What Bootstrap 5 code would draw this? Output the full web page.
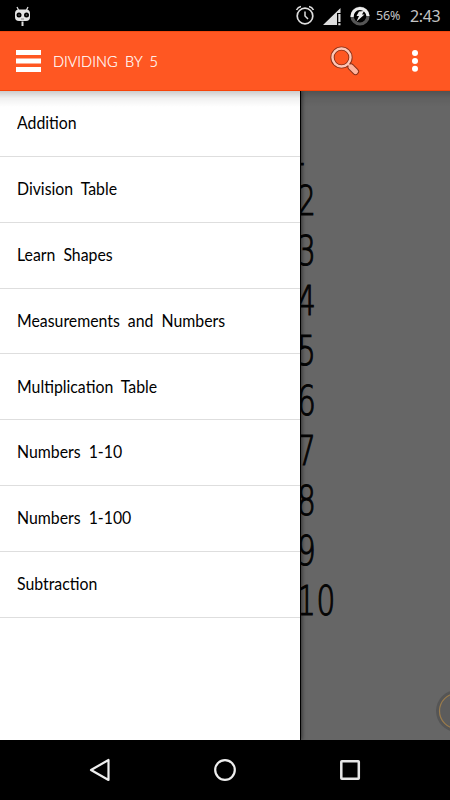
<!DOCTYPE html>
<html lang="en">
<head>
<meta charset="utf-8">
<meta name="viewport" content="width=device-width, initial-scale=1">
<title>Dividing by 5</title>
<link href="https://cdn.jsdelivr.net/npm/bootstrap@5.3.0/dist/css/bootstrap.min.css" rel="stylesheet">
<style>
body{font-family:Lato,"Open Sans",sans-serif;width:450px;height:800px;overflow:hidden;background:#000}
svg{display:block;flex:none}
.status{height:31px;font-family:"Noto Sans","Open Sans",sans-serif;color:#c4c4c4;padding:0 10px 0 14px}
.percent{font-size:12.5px;width:34px;margin-left:6px;padding-top:1px;letter-spacing:-.1px}
.clock{font-size:16px;width:30px;letter-spacing:-.35px}
.battery{margin-left:9px}
.appbar{height:60px;background:#ff5722;border-top:1px solid #f24a10;border-bottom:1px solid #f74409;padding:0 29px 0 16px;z-index:3}
.heading{font-size:16.500px;font-weight:300;color:#fff;margin-left:12px;word-spacing:4px;line-height:20px;padding-bottom:1px;transform:scaleX(.88);transform-origin:0 50%;-webkit-text-stroke:.2px #fff}
.search{margin-right:49px}
.stage{height:649px;background:#666}
.drawer{width:301px;background:#fff;border-right:1px solid #000;box-shadow:1px 0 4px rgba(0,0,0,.55);z-index:1}
.shade{height:16px;background:linear-gradient(rgba(0,0,0,.2),rgba(0,0,0,.06) 45%,transparent);z-index:2}
.entry{height:65.86px;border-bottom:1px solid #dedede;padding:0 0 1.500px 17px;font-size:18px;color:#000}
.entry span{transform:scaleX(.88);transform-origin:0 50%;word-spacing:4.500px}
.answers{padding:35px 0 0 297px;font-family:"DejaVu Sans",sans-serif;font-weight:200;font-size:41px;color:#050505;-webkit-text-stroke:1.2px #050505}
.answers div{height:50px;line-height:50px;transform:scaleX(.72);transform-origin:0 50%;letter-spacing:1px}
.answers div:first-child{margin-left:-9px}
.bubble{right:-29px;bottom:7px}
.softkeys{height:60px;padding:0 89px}
</style>
<script src="https://cdn.jsdelivr.net/npm/bootstrap@5.3.0/dist/js/bootstrap.bundle.min.js"></script>
</head>
<body>
<header class="status d-flex align-items-center">
  <svg width="18" height="22" viewBox="0 0 18 22"><path d="M3 2l2 4M14 2l-2 4" stroke="#ddd" stroke-width="1.3"/><rect x="1" y="4.500" width="15" height="11.500" rx="4" fill="#e4e4e4"/><circle cx="5" cy="10" r="2.500"/><circle cx="12.500" cy="10" r="2.500"/><circle cx="5" cy="10" r=".8" fill="#666"/><circle cx="12.500" cy="10" r=".8" fill="#666"/><path d="M7 14h3" stroke="#888"/><path d="M8.500 16.500v4.500" stroke="#ddd" stroke-width="2"/></svg>
  <svg class="ms-auto" width="20" height="22" viewBox="0 0 20 22" fill="none" stroke="#dedede"><circle cx="10" cy="11" r="7.800" stroke-width="1.700"/><path d="M10 6.500V11l3 3" stroke-width="1.500"/><path d="M1.500 5q1.500-3 4.500-3.500M18.500 5Q17 2 14 1.500" stroke-width="1.600"/></svg>
  <svg class="ms-2" width="18" height="20" viewBox="0 0 18 20" fill="#dedede"><path d="M0 19L17.500 2v5H14v12z"/><path d="M15.300 8h2.200v8h-2.200zM15.300 17.200h2.200v2h-2.200z"/></svg>
  <svg class="battery" width="20" height="20" viewBox="0 0 20 20"><circle cx="10" cy="10" r="8" fill="none" stroke="#555" stroke-width="3.200"/><path d="M2 11a8 8 0 1 1 16-1" fill="none" stroke="#eee" stroke-width="3.200"/><path d="M9 5.500l5-.5-2 3.500h2.500l-8 7 2.500-5.500H6.500z" fill="#eee"/></svg>
  <span class="percent">56%</span><span class="clock">2:43</span>
</header>
<nav class="appbar d-flex align-items-center position-relative">
  <svg width="25" height="24" viewBox="0 0 25 24" fill="#fff"><path d="M0 1h25v5H0zM0 9.500h25v5H0zM0 18h25v5H0z"/></svg>
  <span class="heading">DIVIDING BY 5</span>
  <svg class="search ms-auto" width="30" height="30" viewBox="0 0 30 30"><circle cx="11.500" cy="11.500" r="9" fill="none" stroke="#873018" stroke-width="4.200"/><path d="M18 18l2.500 2.500" stroke="#873018" stroke-width="3.500"/><path d="M21 21l4.500 4.500" stroke="#873018" stroke-width="7" stroke-linecap="round"/><path d="M17.500 17.500l3 3" stroke="#ffc0ae" stroke-width="1.600"/><circle cx="11.500" cy="11.500" r="9" fill="none" stroke="#ffc7b7" stroke-width="2.400"/><path d="M21 21l4.500 4.500" stroke="#ffb39d" stroke-width="5.200" stroke-linecap="round"/></svg>
  <svg width="12" height="24" viewBox="0 0 12 24" fill="#fff"><circle cx="6" cy="4" r="3"/><circle cx="6" cy="12" r="3"/><circle cx="6" cy="19.700" r="3"/></svg>
</nav>
<main class="stage position-relative overflow-hidden">
  <div class="answers"><div>1</div><div>2</div><div>3</div><div>4</div><div>5</div><div>6</div><div>7</div><div>8</div><div>9</div><div>10</div></div>
  <svg class="bubble position-absolute" width="44" height="44" viewBox="0 0 44 44"><circle cx="22" cy="22" r="21" fill="#555"/><circle cx="22" cy="22" r="17.500" fill="#5c5c5c" stroke="#9b7c4c" stroke-width="1.200"/></svg>
  <aside class="drawer position-absolute top-0 start-0 h-100">
    <div class="entry d-flex align-items-center"><span>Addition</span></div>
    <div class="entry d-flex align-items-center"><span>Division Table</span></div>
    <div class="entry d-flex align-items-center"><span>Learn Shapes</span></div>
    <div class="entry d-flex align-items-center"><span>Measurements and Numbers</span></div>
    <div class="entry d-flex align-items-center"><span>Multiplication Table</span></div>
    <div class="entry d-flex align-items-center"><span>Numbers 1-10</span></div>
    <div class="entry d-flex align-items-center"><span>Numbers 1-100</span></div>
    <div class="entry d-flex align-items-center"><span>Subtraction</span></div>
  </aside>
  <div class="shade position-absolute top-0 start-0 w-100"></div>
</main>
<footer class="softkeys d-flex align-items-center justify-content-between">
  <svg width="22" height="24" viewBox="0 0 22 24" fill="none" stroke="#eee" stroke-width="2.200"><path d="M2 12L19.500 2v20z" stroke-linejoin="round"/></svg>
  <svg width="24" height="24" viewBox="0 0 24 24" fill="none" stroke="#eee" stroke-width="2.200"><circle cx="12" cy="12" r="9.800"/></svg>
  <svg width="22" height="24" viewBox="0 0 22 24" fill="none" stroke="#e6e6e6" stroke-width="2.500"><rect x="2.300" y="3.300" width="17.500" height="17.500" rx=".5"/></svg>
</footer>
</body>
</html>
